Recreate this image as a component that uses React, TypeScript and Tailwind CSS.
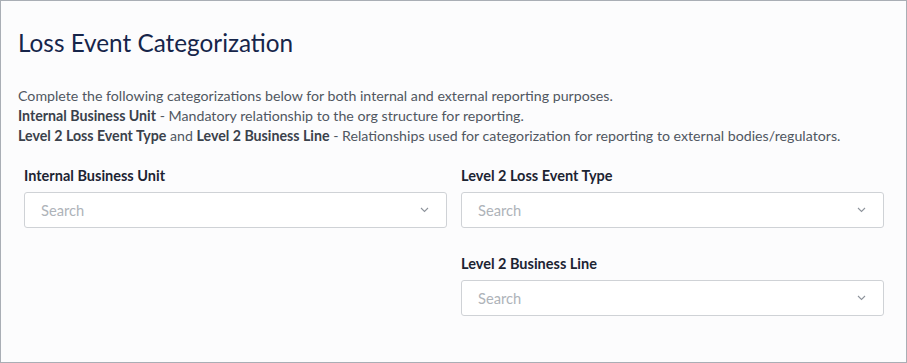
import React from 'react';

function SearchSelect() {
  return (
    <div className="flex h-[36px] items-center justify-between rounded-[3px] border border-[#cfd2d6] bg-white pl-[16px] pr-[17px]">
      <span className="text-[14.7px] text-[#aeb3b9]">Search</span>
      <svg width="9" height="6" viewBox="0 0 9 6" fill="none">
        <path d="M1 1l3.5 3.5L8 1" stroke="#8e949c" strokeWidth="1.1" />
      </svg>
    </div>
  );
}

function Field({ label }: { label: string }) {
  return (
    <div className="flex flex-col">
      <label className="mb-[7px] text-[14.5px] font-bold leading-[18px] text-[#1c2433]">{label}</label>
      <SearchSelect />
    </div>
  );
}

export default function App() {
  return (
    <div
      className="h-[363px] w-[907px] border border-[#a9aeb5] bg-[#fcfcfd]"
      style={{ fontFamily: 'Lato, "Noto Sans", sans-serif' }}
    >
      <div className="px-[17px] pt-[26px]">
        <h1 className="text-[24.3px] leading-[32px] text-[#16254a]">Loss Event Categorization</h1>
        <div className="mt-[27px] text-[14.2px] leading-[20px] text-[#505761]">
          <p>Complete the following categorizations below for both internal and external reporting purposes.</p>
          <p>
            <b className="text-[#3a414b]">Internal Business Unit</b> - Mandatory relationship to the org structure for reporting.
          </p>
          <p>
            <b className="text-[#3a414b]">Level 2 Loss Event Type</b> and <b className="text-[#3a414b]">Level 2 Business Line</b> - Relationships used for categorization for reporting to external bodies/regulators.
          </p>
        </div>
      </div>
      <div className="mt-[21px] grid grid-cols-2 gap-x-[14px] gap-y-[27px] pl-[23px] pr-[22px]">
        <Field label="Internal Business Unit" />
        <Field label="Level 2 Loss Event Type" />
        <div />
        <Field label="Level 2 Business Line" />
      </div>
    </div>
  );
}
